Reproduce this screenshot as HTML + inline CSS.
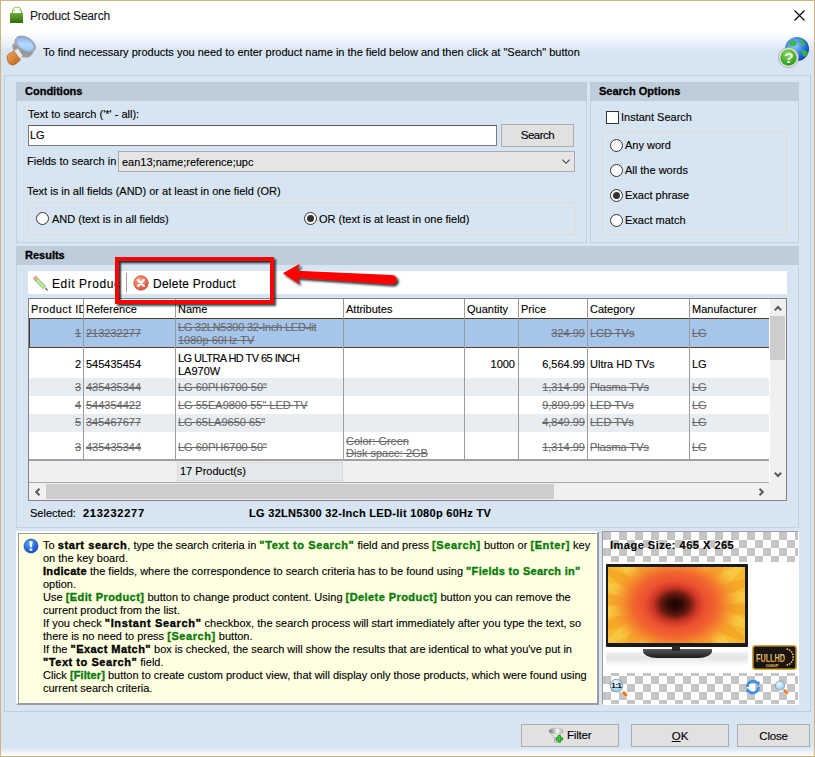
<!DOCTYPE html>
<html><head><meta charset="utf-8">
<style>
*{box-sizing:border-box;margin:0;padding:0}
html,body{width:815px;height:757px;overflow:hidden;background:#fff}
body{font-family:"Liberation Sans",sans-serif;font-size:11px;color:#000;position:relative}
.a{position:absolute}
.t{position:absolute;white-space:nowrap;line-height:13px}
#win{left:0;top:0;width:815px;height:757px;border:1px solid #cfb47f;
 background:linear-gradient(to bottom,#fff 0,#fff 32px,#d7e4f2 51px,#d7e4f2 746px,#fff 755px)}
.grp{position:absolute;border:1px solid #c3d1df;background:#d7e4f2}
.gh{position:absolute;left:-1px;top:-1px;right:-1px;height:19px;background:#bfccda;font-weight:bold;padding-left:9px;line-height:19px;font-size:11px}
.rgb{position:absolute;border:1px solid #e2dccf}
.radio{position:absolute;width:13px;height:13px;border:1px solid #333;border-radius:50%;background:#fff}
.radio.on::after{content:"";position:absolute;left:2px;top:2px;width:7px;height:7px;border-radius:50%;background:#333}
.del{color:#6a6a6a;text-decoration:line-through}
.g{color:#0a7a0a}
.hl b{letter-spacing:var(--bls,0.5px);-webkit-text-stroke:0.35px currentColor}
.gh,[style*="font-weight:bold"]{-webkit-text-stroke:0.3px currentColor}
.t,.btn{-webkit-text-stroke:0.12px currentColor}
.btn{position:absolute;border:1px solid #adadad;background:#e1e1e1;text-align:center;font-size:12px}
</style></head><body>
<div id="win" class="a"></div>

<!-- title bar -->
<svg class="a" style="left:10px;top:6px" width="14" height="18" viewBox="0 0 14 18">
 <defs><linearGradient id="bag" x1="0" y1="0" x2="0" y2="1"><stop offset="0" stop-color="#86be46"/><stop offset="1" stop-color="#2e6c08"/></linearGradient></defs>
 <path d="M4.5 5.2 L3.2 3.2 L4.8 1.3 H9.2 L10.8 3.2 L9.5 5.2" fill="none" stroke="#a4d46a" stroke-width="1.2"/>
 <path d="M2 4 L3 4 L3 7 L11 7 L11 4 L12 4 L12 7 L13 7 L13 17 L0 17 L0 7 L2 7 Z" fill="url(#bag)"/>
</svg>
<div class="t" style="left:30px;top:9px;font-size:12px;line-height:15px;color:#1a1a1a;letter-spacing:-0.2px">Product Search</div>
<svg class="a" style="left:794px;top:10px" width="11" height="11" viewBox="0 0 11 11"><path d="M0.5 0.5 L10.5 10.5 M10.5 0.5 L0.5 10.5" stroke="#000" stroke-width="1.1"/></svg>

<!-- info strip -->
<div class="t" style="left:43px;top:46px">To find necessary products you need to enter product name in the field below and then click at "Search" button</div>


<!-- magnifier icon -->
<svg class="a" style="left:1px;top:31px" width="40" height="40" viewBox="0 0 40 40">
 <defs>
  <linearGradient id="rim" x1="0" y1="0" x2="1" y2="1"><stop offset="0" stop-color="#ffffff"/><stop offset="0.45" stop-color="#d0d0d0"/><stop offset="1" stop-color="#8a8a8a"/></linearGradient>
  <linearGradient id="lens" x1="0" y1="0" x2="1" y2="1"><stop offset="0" stop-color="#7aa8f0"/><stop offset="0.5" stop-color="#b8d8fa"/><stop offset="1" stop-color="#8cc8f8"/></linearGradient>
  <linearGradient id="hdl" x1="0" y1="0" x2="1" y2="1"><stop offset="0" stop-color="#f8a860"/><stop offset="1" stop-color="#b86018"/></linearGradient>
 </defs>
 <g transform="rotate(30 25 16)">
  <ellipse cx="23" cy="19.5" rx="11" ry="7.5" fill="#9a9a9a"/>
  <rect x="12" y="14" width="22" height="5.5" fill="url(#rim)"/>
  <ellipse cx="23" cy="14" rx="11" ry="7" fill="#c8c8c8" stroke="#8a8a8a" stroke-width="0.8"/>
  <ellipse cx="23" cy="14" rx="9.6" ry="5.6" fill="url(#lens)" stroke="#6a90d8" stroke-width="0.6"/>
 </g>
 <path d="M11 21 L17 17 L22 25 L16 29 Z" fill="#e8e8e8" stroke="#9a9a9a" stroke-width="0.6"/>
 <path d="M6 27.5 Q5 24 9 22 L13 20 L19.5 29 L15.5 32.5 Q12 35.5 8.5 33 Q6.5 31 6 27.5 Z" fill="url(#hdl)" stroke="#9a5418" stroke-width="0.5"/>
</svg>
<!-- help globe -->
<svg class="a" style="left:777px;top:36px" width="33" height="33" viewBox="0 0 33 33">
 <defs>
  <radialGradient id="glb" cx="0.4" cy="0.35" r="0.7"><stop offset="0" stop-color="#9ad0ff"/><stop offset="0.6" stop-color="#2a7ae0"/><stop offset="1" stop-color="#0a3ab0"/></radialGradient>
  <radialGradient id="hq" cx="0.45" cy="0.3" r="0.7"><stop offset="0" stop-color="#8ee05a"/><stop offset="1" stop-color="#239a1a"/></radialGradient>
 </defs>
 <circle cx="20" cy="13" r="12" fill="url(#glb)"/>
 <path d="M12 6 Q15 3 19 5 Q21 8 18 10 Q14 11 13 9 Z M22 3 Q27 4 29 9 Q26 10 24 8 Q22 6 22 3 Z M25 14 Q30 14 31 18 Q28 22 26 20 Q24 17 25 14 Z M14 15 Q18 16 18 20 Q15 22 13 19 Z" fill="#3cb83c" opacity="0.9"/>
 <circle cx="11.5" cy="21.5" r="10" fill="#e8e8e8" stroke="#a0a0a0" stroke-width="0.8"/>
 <circle cx="11.5" cy="21.5" r="8.2" fill="url(#hq)"/>
 <text x="11.8" y="26.5" font-family="Liberation Sans" font-size="15" font-weight="bold" text-anchor="middle" fill="#fff">?</text>
</svg>

<!-- outer panel -->
<div class="a" style="left:4px;top:75px;width:807px;height:637px;border:1px solid #bfcedc"></div>

<!-- Conditions -->
<div class="grp" style="left:16px;top:82px;width:571px;height:161px"><div class="gh">Conditions</div></div>
<!-- Search options -->
<div class="grp" style="left:590px;top:82px;width:209px;height:161px"><div class="gh">Search Options</div></div>
<!-- Results -->
<div class="grp" style="left:16px;top:246px;width:783px;height:282px"><div class="gh">Results</div></div>


<!-- Conditions content -->
<div class="t" style="left:28px;top:108px">Text to search ('*' - all):</div>
<div class="a" style="left:28px;top:125px;width:469px;height:21px;background:#fff;border:1px solid #7a7a7a;border-top-color:#5a5a5a"></div>
<div class="t" style="left:30px;top:129px">LG</div>
<div class="btn" style="left:501px;top:124px;width:73px;height:23px;line-height:21px;font-size:11.5px;letter-spacing:-0.5px">Search</div>
<div class="t" style="left:27px;top:155px">Fields to search in</div>
<div class="a" style="left:118px;top:151px;width:457px;height:21px;background:#e5e5e5;border:1px solid #acacac"></div>
<div class="t" style="left:122px;top:156px">ean13;name;reference;upc</div>
<svg class="a" style="left:562px;top:159px" width="8" height="6" viewBox="0 0 8 6"><path d="M0.3 0.6 L4 4.3 L7.7 0.6" fill="none" stroke="#3a3a3a" stroke-width="1.05"/></svg>
<div class="t" style="left:27px;top:185px">Text is in all fields (AND) or at least in one field (OR)</div>
<div class="rgb" style="left:28px;top:202px;width:548px;height:33px"></div>
<div class="radio" style="left:36px;top:212px"></div>
<div class="t" style="left:52px;top:213px">AND (text is in all fields)</div>
<div class="radio on" style="left:304px;top:212px"></div>
<div class="t" style="left:319px;top:213px">OR (text is at least in one field)</div>

<!-- Search options content -->
<div class="a" style="left:606px;top:111px;width:13px;height:13px;background:#fff;border:1px solid #333"></div>
<div class="t" style="left:621px;top:111px">Instant Search</div>
<div class="rgb" style="left:602px;top:131px;width:185px;height:104px"></div>
<div class="radio" style="left:610px;top:139px"></div><div class="t" style="left:625px;top:139px">Any word</div>
<div class="radio" style="left:610px;top:164px"></div><div class="t" style="left:625px;top:164px">All the words</div>
<div class="radio on" style="left:610px;top:189px"></div><div class="t" style="left:625px;top:189px">Exact phrase</div>
<div class="radio" style="left:610px;top:214px"></div><div class="t" style="left:625px;top:214px">Exact match</div>


<!-- Results content -->
<div class="a" style="left:28px;top:271px;width:759px;height:23px;background:#fff"></div>
<svg class="a" style="left:32px;top:275px" width="17" height="17" viewBox="0 0 17 17">
 <defs><linearGradient id="pen" x1="0" y1="1" x2="1" y2="0"><stop offset="0" stop-color="#7cc86a"/><stop offset="0.5" stop-color="#b8eea0"/><stop offset="1" stop-color="#6ab85a"/></linearGradient></defs>
 <path d="M3.2 5.8 L5.8 3.2 L13.6 11 L11 13.6 Z" fill="url(#pen)" stroke="#5a9a4a" stroke-width="0.6"/>
 <path d="M1.8 4.4 Q1.2 3 2.4 1.8 Q3.6 0.8 4.6 1.6 L5.8 3.2 L3.2 5.8 Z" fill="#f4a898" stroke="#d07060" stroke-width="0.5"/>
 <path d="M11 13.6 L13.6 11 L15.2 15.2 Z" fill="#f0c8a0"/>
 <path d="M13.8 14.2 L14.4 13.6 L15.4 15.4 Z" fill="#555" stroke="#555" stroke-width="0.9"/>
</svg>
<div class="a" style="left:52px;top:277px;width:68px;height:16px;overflow:hidden"><div class="t" style="left:0;top:0;font-size:12px;line-height:15px;letter-spacing:0.6px">Edit Product</div></div>
<div class="a" style="left:126px;top:273px;width:1px;height:19px;background:#a0a0a0"></div>
<svg class="a" style="left:133px;top:275px" width="16" height="16" viewBox="0 0 16 16">
 <defs><radialGradient id="del" cx="0.4" cy="0.35" r="0.7"><stop offset="0" stop-color="#ffb49a"/><stop offset="1" stop-color="#d9442a"/></radialGradient></defs>
 <circle cx="8" cy="8" r="7.2" fill="url(#del)" stroke="#c8503a" stroke-width="0.8"/>
 <path d="M5 5 L11 11 M11 5 L5 11" stroke="#fff" stroke-width="2.2" stroke-linecap="round"/>
</svg>
<div class="t" style="left:153px;top:277px;font-size:12px;line-height:15px;letter-spacing:0.25px">Delete Product</div>

<!-- grid -->
<div class="a" style="left:28px;top:298px;width:759px;height:203px;border:1px solid #828282;background:#fff"></div>

<div class="a" style="left:29px;top:378px;width:740px;height:18px;background:#e8edf2"></div>
<div class="a" style="left:29px;top:414px;width:740px;height:18px;background:#e8edf2"></div>
<div class="a" style="left:29px;top:318px;width:740px;height:30px;background:#a6c5ea;border:1px solid #5a3d1c;border-right:none"></div>
<div class="a" style="left:83px;top:299px;width:1px;height:160px;background:#9c9c9c"></div>
<div class="a" style="left:175px;top:299px;width:1px;height:160px;background:#9c9c9c"></div>
<div class="a" style="left:343px;top:299px;width:1px;height:160px;background:#9c9c9c"></div>
<div class="a" style="left:464px;top:299px;width:1px;height:160px;background:#9c9c9c"></div>
<div class="a" style="left:518px;top:299px;width:1px;height:160px;background:#9c9c9c"></div>
<div class="a" style="left:587px;top:299px;width:1px;height:160px;background:#9c9c9c"></div>
<div class="a" style="left:689px;top:299px;width:1px;height:160px;background:#9c9c9c"></div>
<div class="a" style="left:29px;top:299px;width:54px;height:19px;overflow:hidden"><div class="t" style="left:2px;top:4px;letter-spacing:0.4px">Product ID</div></div>
<div class="t" style="left:86px;top:303px">Reference</div>
<div class="t" style="left:178px;top:303px">Name</div>
<div class="t" style="left:346px;top:303px">Attributes</div>
<div class="t" style="left:467px;top:303px">Quantity</div>
<div class="t" style="left:521px;top:303px">Price</div>
<div class="t" style="left:590px;top:303px">Category</div>
<div class="t" style="left:692px;top:303px">Manufacturer</div>
<div class="a" style="left:0;top:1px;width:815px;height:0">
<div class="t del" style="top:326px;right:734px;">1</div>
<div class="t del" style="top:326px;left:86px;">213232277</div>
<div class="t del" style="top:320px;left:178px;letter-spacing:-0.22px">LG 32LN5300 32-Inch LED-lit</div>
<div class="t del" style="top:333px;left:178px;">1080p 60Hz TV</div>
<div class="t del" style="top:326px;right:230px;">324.99</div>
<div class="t del" style="top:326px;left:590px;">LCD TVs</div>
<div class="t del" style="top:326px;left:692px;">LG</div>
<div class="t" style="top:357px;right:734px;">2</div>
<div class="t" style="top:357px;left:86px;">545435454</div>
<div class="t" style="top:351px;left:178px;letter-spacing:-0.55px">LG ULTRA HD TV 65 INCH</div>
<div class="t" style="top:364px;left:178px;">LA970W</div>
<div class="t" style="top:357px;right:300px;">1000</div>
<div class="t" style="top:357px;right:230px;">6,564.99</div>
<div class="t" style="top:357px;left:590px;">Ultra HD TVs</div>
<div class="t" style="top:357px;left:692px;">LG</div>
<div class="t del" style="top:380px;right:734px;">3</div>
<div class="t del" style="top:380px;left:86px;">435435344</div>
<div class="t del" style="top:380px;left:178px;">LG 60PH6700 50&quot;</div>
<div class="t del" style="top:380px;right:230px;">1,314.99</div>
<div class="t del" style="top:380px;left:590px;">Plasma TVs</div>
<div class="t del" style="top:380px;left:692px;">LG</div>
<div class="t del" style="top:398px;right:734px;">4</div>
<div class="t del" style="top:398px;left:86px;">544354422</div>
<div class="t del" style="top:398px;left:178px;">LG 55EA9800 55&quot; LED TV</div>
<div class="t del" style="top:398px;right:230px;">9,899.99</div>
<div class="t del" style="top:398px;left:590px;">LED TVs</div>
<div class="t del" style="top:398px;left:692px;">LG</div>
<div class="t del" style="top:415px;right:734px;">5</div>
<div class="t del" style="top:415px;left:86px;">345467677</div>
<div class="t del" style="top:415px;left:178px;">LG 65LA9650 65&quot;</div>
<div class="t del" style="top:415px;right:230px;">4,849.99</div>
<div class="t del" style="top:415px;left:590px;">LED TVs</div>
<div class="t del" style="top:415px;left:692px;">LG</div>
<div class="t del" style="top:440px;right:734px;">3</div>
<div class="t del" style="top:440px;left:86px;">435435344</div>
<div class="t del" style="top:440px;left:178px;">LG 60PH6700 50&quot;</div>
<div class="t del" style="top:434px;left:346px;">Color: Green</div>
<div class="t del" style="top:446px;left:346px;">Disk space: 2GB</div>
<div class="t del" style="top:440px;right:230px;">1,314.99</div>
<div class="t del" style="top:440px;left:590px;">Plasma TVs</div>
<div class="t del" style="top:440px;left:692px;">LG</div>
</div>
<div class="a" style="left:29px;top:459px;width:740px;height:2px;background:#a0a0a0"></div>
<div class="a" style="left:29px;top:461px;width:740px;height:21px;background:#f0f0f0"></div>
<div class="a" style="left:177px;top:462px;width:166px;height:19px;background:#e4e8eb;border:1px solid #d6d9dc"></div>
<div class="t" style="left:180px;top:465px">17 Product(s)</div>
<div class="a" style="left:29px;top:482px;width:740px;height:1px;background:#a8a8a8"></div>
<div class="a" style="left:29px;top:483px;width:757px;height:17px;background:#f0f0f0"></div>
<div class="a" style="left:46px;top:484px;width:508px;height:15px;background:#cdcdcd"></div>
<svg class="a" style="left:34px;top:488px" width="7" height="8" viewBox="0 0 7 8"><path d="M5.5 0.8 L2.2 4 L5.5 7.2" fill="none" stroke="#5a5a5a" stroke-width="2"/></svg>
<svg class="a" style="left:758px;top:488px" width="7" height="8" viewBox="0 0 7 8"><path d="M1.5 0.8 L4.8 4 L1.5 7.2" fill="none" stroke="#5a5a5a" stroke-width="2"/></svg>
<div class="a" style="left:770px;top:299px;width:16px;height:184px;background:#f0f0f0"></div>
<div class="a" style="left:770px;top:316px;width:15px;height:44px;background:#cdcdcd"></div>
<svg class="a" style="left:774px;top:305px" width="8" height="6" viewBox="0 0 8 6"><path d="M0.8 5.2 L4 2 L7.2 5.2" fill="none" stroke="#5a5a5a" stroke-width="2"/></svg>
<svg class="a" style="left:774px;top:472px" width="8" height="6" viewBox="0 0 8 6"><path d="M0.8 0.8 L4 4 L7.2 0.8" fill="none" stroke="#5a5a5a" stroke-width="2"/></svg>
<div class="t" style="left:30px;top:507px">Selected:</div>
<div class="t" style="left:83px;top:507px;font-weight:bold;letter-spacing:0.75px">213232277</div>
<div class="t" style="left:249px;top:507px;font-weight:bold;letter-spacing:0.3px">LG 32LN5300 32-Inch LED-lit 1080p 60Hz TV</div>

<!-- red highlight box -->
<div class="a" style="left:115px;top:257px;width:159px;height:47px;border:4px solid #ff0000;box-shadow:inset 2px 2px 2px rgba(10,25,25,0.85), 2px 2px 2px rgba(10,25,25,0.8)"></div>
<!-- arrow -->
<svg class="a" style="left:278px;top:258px" width="132" height="36" viewBox="0 0 132 36">
 <defs><filter id="sh" x="-10%" y="-40%" width="130%" height="200%"><feGaussianBlur in="SourceAlpha" stdDeviation="1.1"/><feOffset dx="2" dy="2.2" result="b"/><feFlood flood-color="#102020" flood-opacity="0.9"/><feComposite in2="b" operator="in"/><feMerge><feMergeNode/><feMergeNode in="SourceGraphic"/></feMerge></filter></defs>
 <path d="M4.8 15.2 L20.5 6.6 Q22 6 21.6 7.6 L18.6 12.8 L114 16.9 A4.8 4.8 0 0 1 114 26.5 L19.2 20 L21 24.6 Q21.3 26 19.8 25.3 Z" fill="#ff0000" filter="url(#sh)"/>
</svg>
<!-- help box -->
<div class="a" style="left:16px;top:531px;width:583px;height:174px;border:2px solid #fff;border-right-color:#9c9c9c;border-bottom-color:#9c9c9c"></div>
<div class="a" style="left:18px;top:533px;width:579px;height:170px;background:#ffffe1;border:1px solid #9c9c9c;border-right-color:#fff;border-bottom-color:#fff"></div>
<svg class="a" style="left:23px;top:538px" width="16" height="16" viewBox="0 0 16 16">
 <defs><radialGradient id="inf" cx="0.4" cy="0.3" r="0.75"><stop offset="0" stop-color="#5aa8ff"/><stop offset="1" stop-color="#0a46c0"/></radialGradient></defs>
 <circle cx="8" cy="8" r="7" fill="url(#inf)" stroke="#0a3aa0" stroke-width="0.6"/>
 <path d="M6.4 3.2 H9.6 L9 9.3 H7 Z" fill="#fff"/><rect x="6.6" y="10.4" width="2.8" height="2.4" rx="0.6" fill="#fff"/>
</svg>

<div class="t hl" style="left:43px;top:539px;--bls:0.6px">To <b>start search</b>, type the search criteria in <b class="g">&quot;Text to Search&quot;</b> field and press <b class="g">[Search]</b> button or <b class="g">[Enter]</b> key</div>
<div class="t hl" style="left:43px;top:552px">on the key board.</div>
<div class="t hl" style="left:43px;top:565px;--bls:0.3px"><b>Indicate</b> the fields, where the correspondence to search criteria has to be found using <b class="g">&quot;Fields to Search in&quot;</b></div>
<div class="t hl" style="left:43px;top:578px">option.</div>
<div class="t hl" style="left:43px;top:591px;--bls:0.43px">Use <b class="g">[Edit Product]</b> button to change product content. Using <b class="g">[Delete Product]</b> button you can remove the</div>
<div class="t hl" style="left:43px;top:604px">current product from the list.</div>
<div class="t hl" style="left:43px;top:617px;--bls:0.66px">If you check <b>&quot;Instant Search&quot;</b> checkbox, the search process will start immediately after you type the text, so</div>
<div class="t hl" style="left:43px;top:630px;--bls:0.58px">there is no need to press <b class="g">[Search]</b> button.</div>
<div class="t hl" style="left:43px;top:643px;--bls:0.45px">If the <b>&quot;Exact Match&quot;</b> box is checked, the search will show the results that are identical to what you've put in</div>
<div class="t hl" style="left:43px;top:656px;--bls:0.55px"><b>&quot;Text to Search&quot;</b> field.</div>
<div class="t hl" style="left:43px;top:669px;--bls:0.1px">Click <b class="g">[Filter]</b> button to create custom product view, that will display only those products, which were found using</div>
<div class="t hl" style="left:43px;top:682px">current search criteria.</div>

<!-- image panel -->
<div class="a" style="left:602px;top:531px;width:197px;height:174px;border:1px solid #a0a0a0;border-right-color:#fff;border-bottom-color:#fff;background:#fff"></div>
<svg class="a" style="left:603px;top:532px" width="195" height="172" viewBox="0 0 195 172">
 <defs><pattern id="chk" width="16" height="16" patternUnits="userSpaceOnUse"><rect width="16" height="16" fill="#fff"/><rect width="8" height="8" fill="#c4c4c4"/><rect x="8" y="8" width="8" height="8" fill="#c4c4c4"/></pattern></defs>
 <rect width="195" height="172" fill="url(#chk)"/>
</svg>
<div class="t" style="left:610px;top:539px;font-weight:bold;letter-spacing:0.5px">Image Size: 465 X 265</div>
<div class="a" style="left:603px;top:562px;width:195px;height:111px;background:#fff"></div>
<!-- tv -->
<div class="a" style="left:606px;top:564px;width:142px;height:83px;background:#1a1a1a;border-radius:1px"></div>
<svg class="a" style="left:608px;top:567px" width="137" height="76" viewBox="0 0 137 76">
 <defs>
  <radialGradient id="flw" cx="67" cy="37.5" r="66" gradientUnits="userSpaceOnUse" gradientTransform="translate(67 37.5) scale(1 0.78) translate(-67 -37.5)">
   <stop offset="0" stop-color="#1a0604"/><stop offset="0.1" stop-color="#2e0a06"/><stop offset="0.22" stop-color="#6a1a10"/><stop offset="0.33" stop-color="#c83424"/><stop offset="0.46" stop-color="#ec5030"/><stop offset="0.64" stop-color="#f2682e"/><stop offset="0.8" stop-color="#f58a2c" stop-opacity="0.85"/><stop offset="1" stop-color="#f5a02a" stop-opacity="0"/>
  </radialGradient>
 </defs>
 <rect width="137" height="76" fill="#f6b82e"/>
 <ellipse cx="118.8" cy="41.0" rx="30" ry="5.5" transform="rotate(5.0 118.8 41.0)" fill="#f4a826"/><ellipse cx="116.5" cy="49.8" rx="30" ry="5.5" transform="rotate(17.9 116.5 49.8)" fill="#f9c640"/><ellipse cx="111.7" cy="57.9" rx="30" ry="5.5" transform="rotate(30.7 111.7 57.9)" fill="#f4a826"/><ellipse cx="104.7" cy="65.1" rx="30" ry="5.5" transform="rotate(43.6 104.7 65.1)" fill="#f9c640"/><ellipse cx="95.8" cy="70.8" rx="30" ry="5.5" transform="rotate(56.4 95.8 70.8)" fill="#f4a826"/><ellipse cx="85.4" cy="74.9" rx="30" ry="5.5" transform="rotate(69.3 85.4 74.9)" fill="#f9c640"/><ellipse cx="74.1" cy="77.1" rx="30" ry="5.5" transform="rotate(82.1 74.1 77.1)" fill="#f4a826"/><ellipse cx="62.5" cy="77.3" rx="30" ry="5.5" transform="rotate(95.0 62.5 77.3)" fill="#f9c640"/><ellipse cx="51.1" cy="75.6" rx="30" ry="5.5" transform="rotate(107.9 51.1 75.6)" fill="#f4a826"/><ellipse cx="40.4" cy="71.9" rx="30" ry="5.5" transform="rotate(120.7 40.4 71.9)" fill="#f9c640"/><ellipse cx="31.2" cy="66.5" rx="30" ry="5.5" transform="rotate(133.6 31.2 66.5)" fill="#f4a826"/><ellipse cx="23.7" cy="59.6" rx="30" ry="5.5" transform="rotate(146.4 23.7 59.6)" fill="#f9c640"/><ellipse cx="18.4" cy="51.6" rx="30" ry="5.5" transform="rotate(159.3 18.4 51.6)" fill="#f4a826"/><ellipse cx="15.5" cy="43.0" rx="30" ry="5.5" transform="rotate(172.1 15.5 43.0)" fill="#f9c640"/><ellipse cx="15.2" cy="34.0" rx="30" ry="5.5" transform="rotate(185.0 15.2 34.0)" fill="#f4a826"/><ellipse cx="17.5" cy="25.2" rx="30" ry="5.5" transform="rotate(197.9 17.5 25.2)" fill="#f9c640"/><ellipse cx="22.3" cy="17.1" rx="30" ry="5.5" transform="rotate(210.7 22.3 17.1)" fill="#f4a826"/><ellipse cx="29.3" cy="9.9" rx="30" ry="5.5" transform="rotate(223.6 29.3 9.9)" fill="#f9c640"/><ellipse cx="38.2" cy="4.2" rx="30" ry="5.5" transform="rotate(236.4 38.2 4.2)" fill="#f4a826"/><ellipse cx="48.6" cy="0.1" rx="30" ry="5.5" transform="rotate(249.3 48.6 0.1)" fill="#f9c640"/><ellipse cx="59.9" cy="-2.1" rx="30" ry="5.5" transform="rotate(262.1 59.9 -2.1)" fill="#f4a826"/><ellipse cx="71.5" cy="-2.3" rx="30" ry="5.5" transform="rotate(275.0 71.5 -2.3)" fill="#f9c640"/><ellipse cx="82.9" cy="-0.6" rx="30" ry="5.5" transform="rotate(287.9 82.9 -0.6)" fill="#f4a826"/><ellipse cx="93.6" cy="3.1" rx="30" ry="5.5" transform="rotate(300.7 93.6 3.1)" fill="#f9c640"/><ellipse cx="102.8" cy="8.5" rx="30" ry="5.5" transform="rotate(313.6 102.8 8.5)" fill="#f4a826"/><ellipse cx="110.3" cy="15.4" rx="30" ry="5.5" transform="rotate(326.4 110.3 15.4)" fill="#f9c640"/><ellipse cx="115.6" cy="23.4" rx="30" ry="5.5" transform="rotate(339.3 115.6 23.4)" fill="#f4a826"/><ellipse cx="118.5" cy="32.0" rx="30" ry="5.5" transform="rotate(352.1 118.5 32.0)" fill="#f9c640"/>
 <rect width="137" height="76" fill="url(#flw)"/>
</svg>
<div class="a" style="left:606px;top:652px;width:142px;height:14px;background:linear-gradient(to bottom,#f4f4f4,#e4e4e4 40%,#fff)"></div>
<div class="a" style="left:643px;top:649px;width:69px;height:9px;background:linear-gradient(to bottom,#5a5a5a,#1a1a1a);border-radius:0 0 14px 14px/0 0 7px 7px"></div>
<div class="a" style="left:672px;top:646px;width:8px;height:5px;background:#2a2a2a"></div>
<svg class="a" style="left:752px;top:645px" width="45" height="25" viewBox="0 0 45 25">
 <defs><linearGradient id="gold" x1="0" y1="0" x2="0" y2="1"><stop offset="0" stop-color="#f8e0a0"/><stop offset="1" stop-color="#c89028"/></linearGradient></defs>
 <rect x="0.8" y="0.8" width="43.4" height="23.4" rx="2.5" fill="#1a1510" stroke="#d8a838" stroke-width="1.6"/>
 <text x="4" y="16.5" font-family="Liberation Sans" font-size="10" font-weight="bold" fill="url(#gold)" textLength="29" lengthAdjust="spacingAndGlyphs">FULLHD</text>
 <text x="13.5" y="21.8" font-family="Liberation Sans" font-size="4.2" font-weight="bold" fill="#e0b850" textLength="13" lengthAdjust="spacingAndGlyphs">1080P</text>
 <rect x="34.5" y="3.3" width="1.6" height="1.6" fill="#e8c060"/><rect x="36.8" y="4.3" width="1.6" height="1.6" fill="#e8c060"/><rect x="38.7" y="6.1" width="1.6" height="1.6" fill="#e8c060"/><rect x="40.0" y="8.5" width="1.6" height="1.6" fill="#e8c060"/><rect x="40.4" y="11.2" width="1.6" height="1.6" fill="#e8c060"/><rect x="40.0" y="13.9" width="1.6" height="1.6" fill="#e8c060"/><rect x="38.7" y="16.3" width="1.6" height="1.6" fill="#e8c060"/><rect x="36.8" y="18.1" width="1.6" height="1.6" fill="#e8c060"/><rect x="34.5" y="19.1" width="1.6" height="1.6" fill="#e8c060"/>
</svg>
<!-- bottom icons -->
<svg class="a" style="left:608px;top:674px" width="22" height="24" viewBox="0 0 22 24">
 <defs><radialGradient id="mg1" cx="0.45" cy="0.3" r="0.7"><stop offset="0" stop-color="#f4fbff"/><stop offset="1" stop-color="#8ccaf0"/></radialGradient></defs>
 <path d="M13.5 16.5 L18.5 22" stroke="#eee" stroke-width="3.6" stroke-linecap="round"/>
 <path d="M15 18 L18.5 22" stroke="#f07a20" stroke-width="3.2" stroke-linecap="butt"/>
 <circle cx="8.5" cy="11.6" r="6.3" fill="url(#mg1)" stroke="#8a8a8a" stroke-width="0.8"/>
 <text x="8.5" y="14.2" font-family="Liberation Sans" font-size="7.5" font-weight="bold" text-anchor="middle" fill="#000" letter-spacing="-0.3">1:1</text>
</svg>
<svg class="a" style="left:745px;top:679px" width="16" height="16" viewBox="0 0 16 16">
 <path d="M2.5 8 A5.5 5.5 0 0 1 12.5 4.5" fill="none" stroke="#3a8ee6" stroke-width="2.6"/>
 <path d="M13.5 8 A5.5 5.5 0 0 1 3.5 11.5" fill="none" stroke="#3a8ee6" stroke-width="2.6"/>
 <path d="M10 2 L15 3 L13.5 7.5 Z" fill="#3a8ee6"/><path d="M6 14 L1 13 L2.5 8.5 Z" fill="#3a8ee6"/>
</svg>
<svg class="a" style="left:773px;top:679px" width="18" height="18" viewBox="0 0 18 18">
 <defs><radialGradient id="mg2" cx="0.4" cy="0.35" r="0.7"><stop offset="0" stop-color="#f0faff"/><stop offset="1" stop-color="#8cc8ee"/></radialGradient></defs>
 <path d="M10 10 L14.5 14.5" stroke="#eee" stroke-width="3.4" stroke-linecap="round"/>
 <path d="M11 11 L14.5 14.5" stroke="#f07a20" stroke-width="2.8"/>
 <circle cx="7" cy="6.5" r="4.6" fill="url(#mg2)" stroke="#7f98b2" stroke-width="0.8"/>
</svg>

<!-- buttons -->
<div class="btn" style="left:521px;top:724px;width:98px;height:23px"></div>
<svg class="a" style="left:546px;top:725px" width="20" height="20" viewBox="0 0 20 20">
 <defs><linearGradient id="fun" x1="0" y1="0" x2="1" y2="0"><stop offset="0" stop-color="#6a6a6a"/><stop offset="0.6" stop-color="#f8f8f8"/><stop offset="1" stop-color="#b0b0b0"/></linearGradient></defs>
 <path d="M3.2 6.5 L8.6 12.8 L8.6 17 L10.6 17.4 L10.6 12.8 L16.8 6.5 Z" fill="#e8e8e8" stroke="#8a8a8a" stroke-width="0.6"/>
 <ellipse cx="10" cy="6" rx="7" ry="2.8" fill="url(#fun)" stroke="#9a9a9a" stroke-width="0.4"/>
 <rect x="11.8" y="10.2" width="3" height="7.4" fill="#0a8a0a"/><rect x="9.6" y="12.4" width="7.4" height="3" fill="#0a8a0a"/>
 <rect x="12.6" y="11" width="1.4" height="5.8" fill="#40d040"/><rect x="10.4" y="13.2" width="5.8" height="1.4" fill="#40d040"/>
</svg>
<div class="t" style="left:567px;top:728px;font-size:11.5px;line-height:15px;letter-spacing:-0.2px">Filter</div>
<div class="btn" style="left:631px;top:724px;width:98px;height:23px;line-height:22px;font-size:11.5px"><span style="text-decoration:underline">O</span>K</div>
<div class="btn" style="left:737px;top:724px;width:73px;height:23px;line-height:22px;font-size:11.5px;letter-spacing:-0.2px">Close</div>

</body></html>
